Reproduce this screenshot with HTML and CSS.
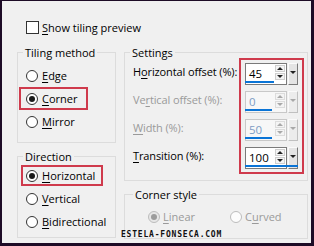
FILE: index.html
```html
<!DOCTYPE html>
<html>
<head>
<meta charset="utf-8">
<link rel="stylesheet" href="styles.css">
</head>
<body>
<div class="dialog">
  <div class="check"><span class="box"></span><span><u>S</u>how tiling preview</span></div>
  <div class="main">
    <div class="left">
      <fieldset class="group tiling">
        <legend>Tiling method</legend>
        <div class="rows">
          <div class="radio"><span class="rb"></span><span><u>E</u>dge</span></div>
          <div class="radio on hl"><span class="rb"></span><span><u>C</u>orner</span></div>
          <div class="radio"><span class="rb"></span><span><u>M</u>irror</span></div>
        </div>
      </fieldset>
      <fieldset class="group direction">
        <legend>Direction</legend>
        <div class="rows">
          <div class="radio on hl"><span class="rb"></span><span><u>H</u>orizontal</span></div>
          <div class="radio"><span class="rb"></span><span><u>V</u>ertical</span></div>
          <div class="radio"><span class="rb"></span><span><u>B</u>idirectional</span></div>
        </div>
      </fieldset>
    </div>
    <div class="right">
      <fieldset class="group settings">
        <legend>Settings</legend>
        <div class="sbody">
          <div class="labels">
            <div class="lab">H<u>o</u>rizontal offset (%):</div>
            <div class="lab dis">Ve<u>r</u>tical offset (%):</div>
            <div class="lab dis"><u>W</u>idth (%):</div>
            <div class="lab"><u>T</u>ransition (%):</div>
          </div>
          <div class="spins">
            <div class="srow">
              <div class="spin">
                <div class="field"><span class="val">45</span><span class="arrows"><span class="up"></span><span class="dn"></span></span></div>
                <div class="drop"></div>
                <div class="bar" style="width:29px"></div>
              </div>
            </div>
            <div class="srow">
              <div class="spin off">
                <div class="field"><span class="val">0</span><span class="arrows"><span class="up"></span><span class="dn"></span></span></div>
                <div class="drop"></div>
                <div class="bar" style="width:27px"></div>
              </div>
            </div>
            <div class="srow">
              <div class="spin off">
                <div class="field"><span class="val">50</span><span class="arrows"><span class="up"></span><span class="dn"></span></span></div>
                <div class="drop"></div>
                <div class="bar" style="width:27px"></div>
              </div>
            </div>
            <div class="srow">
              <div class="spin">
                <div class="field"><span class="val">100</span><span class="arrows"><span class="up"></span><span class="dn"></span></span></div>
                <div class="drop"></div>
                <div class="bar" style="width:53px"></div>
              </div>
            </div>
          </div>
        </div>
      </fieldset>
      <fieldset class="group corner">
        <legend>Corner style</legend>
        <div class="crow">
          <div class="radio on dis w"><span class="rb"></span><span><u>L</u>inear</span></div>
          <div class="radio dis"><span class="rb"></span><span>C<u>u</u>rved</span></div>
        </div>
      </fieldset>
    </div>
  </div>
  <div class="watermark">ESTELA-FONSECA.COM</div>
</div>
</body>
</html>
```
FILE: styles.css
```css
* { box-sizing: border-box; }
html, body { margin: 0; padding: 0; }
body {
  width: 314px;
  height: 246px;
  overflow: hidden;
  font-family: "Open Sans", "Noto Sans", sans-serif;
  font-size: 11px;
  line-height: 15px;
  color: #000;
}
u { text-decoration-thickness: 1px; text-underline-offset: 2px; }

.dialog {
  position: relative;
  width: 314px;
  height: 246px;
  background: #f0f0f0;
  border-style: solid;
  border-color: #1d0b26;
  border-width: 1px 3px 3px 2px;
  padding-top: 19px;
}

.check { display: flex; align-items: center; height: 15px; margin-left: 24px; gap: 3px; }
.box { width: 13px; height: 13px; border: 1px solid #333; background: #fff; }

.main { display: flex; gap: 8px; margin-top: 10px; padding-left: 15px; }
.left { width: 99px; display: flex; flex-direction: column; gap: 6px; }
.right { width: 184px; display: flex; flex-direction: column; gap: 6px; }

fieldset.group { margin: 0; padding: 0; border: 1px solid #dcdcdc; min-width: 0; }
legend { margin-left: 5px; padding: 0 2px; line-height: 15px; }
.corner legend { margin-left: 8px; }

.rows { display: flex; flex-direction: column; align-items: flex-start; }
.tiling .rows { padding: 4px 0 9px 1px; }
.direction .rows { padding: 0 0 4px 1px; }

.radio { display: flex; align-items: center; height: 23px; padding: 0 7px; gap: 4px; white-space: nowrap; }
.rb {
  width: 12px; height: 12px;
  border: 1px solid #333; border-radius: 50%;
  background: #fff;
  display: flex; align-items: center; justify-content: center;
}
.radio.on .rb::after { content: ""; width: 6px; height: 6px; border-radius: 50%; background: #1a1a1a; }
.hl { border: 2px solid #cf3a4c; padding: 0 9px 0 5px; }
.direction .hl { height: 21px; margin: 1px 0 1px 2px; padding: 0 6px 0 3px; }

.sbody { display: flex; margin-top: -2px; padding: 0 3px 6px 8px; }
.labels { flex: 1; min-width: 0; }
.lab { height: 28px; line-height: 28px; white-space: nowrap; letter-spacing: -0.12px; }
.dis { color: #9a9a9a; }

.spins { width: 65px; flex: none; border: 2px solid #cf3a4c; padding: 0 4px; display: flex; flex-direction: column; }
.srow { height: 28px; display: flex; align-items: center; }
.spin { display: grid; grid-template-columns: 42px 11px; grid-template-rows: 22px; width: 53px; }
.field {
  grid-row: 1; grid-column: 1;
  border: 1px solid #7a7a7a; background: #fff;
  display: flex; align-items: stretch;
}
.val { flex: 1; padding-left: 3px; padding-top: 2px; font-size: 11.5px; line-height: 16px; color: #000; }
.arrows { width: 10px; margin: 1px 1px 4px 0; display: flex; flex-direction: column; gap: 1px; }
.up, .dn {
  flex: 1; border: 1px solid #cfcfcf; background: #f4f4f4;
  display: flex; align-items: center; justify-content: center;
}
.up::after { content: ""; border-left: 3px solid transparent; border-right: 3px solid transparent; border-bottom: 3px solid #222; }
.dn::after { content: ""; border-left: 3px solid transparent; border-right: 3px solid transparent; border-top: 3px solid #222; }
.drop {
  grid-row: 1; grid-column: 2;
  margin-left: 1px;
  border: 1px solid; border-color: #fafafa #7a7a7a #7a7a7a #fafafa;
  background: #e4e4e4;
  display: flex; justify-content: center; align-items: flex-start; padding-top: 7px;
}
.drop::after { content: ""; border-left: 3px solid transparent; border-right: 3px solid transparent; border-top: 3px solid #222; }
.bar {
  grid-row: 1; grid-column: 1 / 3;
  align-self: end; height: 2px; margin-bottom: 2px;
  background: #0a74d6; z-index: 1;
}
.spin.off .field { border-color: #c8c8c8; background: #f7f7f7; }
.spin.off .val { color: #7d9cc4; }
.spin.off .up::after { border-bottom-color: #a8a8a8; }
.spin.off .dn::after, .spin.off .drop::after { border-top-color: #a8a8a8; }
.spin.off .drop { border-color: #fafafa #c0c0c0 #c0c0c0 #fafafa; background: #ececec; }
.spin.off .up, .spin.off .dn { border-color: #dcdcdc; }

.crow { display: flex; padding: 3px 0 10px 23px; }
.crow .radio { padding: 0; gap: 3px; }
.crow .w { width: 82px; }
.radio.dis .rb { border-color: #bcbcbc; background: #fcfcfc; }
.radio.dis.on .rb { background: #e6e6e6; }
.radio.dis.on .rb::after { background: #9c9c9c; }

.watermark {
  position: absolute;
  left: 119px;
  top: 229px;
  font-family: "DejaVu Sans Mono", monospace;
  font-weight: bold;
  font-size: 8px;
  line-height: 9px;
  letter-spacing: 0.8px;
  color: #111;
}
```
